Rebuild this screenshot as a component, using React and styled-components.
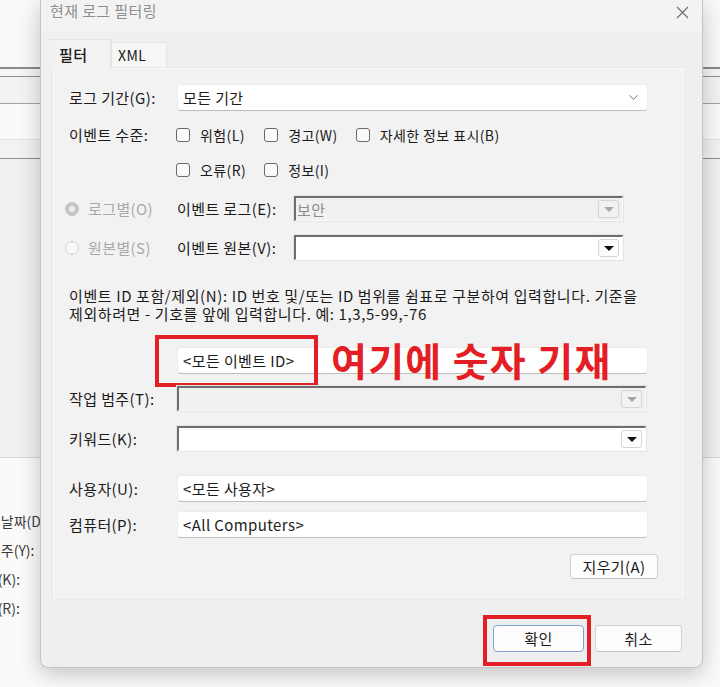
import React from 'react';
import styled, { createGlobalStyle } from 'styled-components';
import { ChevronDown } from 'lucide-react';

const FONT = `"Noto Sans CJK KR", "Noto Sans", "Liberation Sans", sans-serif`;
const FS = '15px';
const LS = '0.4px';

const Global = createGlobalStyle`
  html, body { margin: 0; padding: 0; }
  body {
    width: 720px; height: 687px; overflow: hidden;
    background: #f9f9f9;
    font-family: ${FONT};
    color: #1b1b1b;
  }
  * { box-sizing: border-box; }
`;

const Desktop = styled.div`
  position: relative;
  width: 720px;
  height: 687px;
  overflow: hidden;
`;

/* ---------- background window ---------- */
const BgWindow = styled.div`
  display: flex;
  flex-direction: column;
  width: 100%;
  height: 100%;
`;

const BgBand = styled.div`
  flex: none;
  height: ${p => p.$h}px;
  background: ${p => p.$bg};
  border-bottom: ${p => (p.$line ? `${p.$lw || 1}px solid ${p.$line}` : 'none')};
`;

const BgForm = styled.div`
  flex: 1;
  background: #fafafa;
  border-top: 1px solid #d6d6d6;
  padding-top: 49px;
  margin-left: -41px;
  display: flex;
  flex-direction: column;
`;

const BgLabel = styled.div`
  font-size: 14px;
  line-height: 29px;
  color: #3a3a3a;
  white-space: nowrap;
`;

/* ---------- dialog ---------- */
const Dialog = styled.div`
  position: absolute;
  left: 40px;
  top: 0;
  width: 663px;
  height: 668px;
  background: #efefef;
  border: 1px solid #c4c4c4;
  border-top: none;
  border-radius: 0 0 8px 8px;
  box-shadow: 0 6px 22px rgba(0, 0, 0, 0.22);
  display: flex;
  flex-direction: column;
  letter-spacing: ${LS};
`;

const TitleBar = styled.div`
  height: 31px;
  flex: none;
  display: flex;
  justify-content: space-between;
  align-items: flex-start;
  padding: 0 13px 0 9px;
  background: #f3f3f3;
`;

const Title = styled.div`
  font-size: ${FS};
  line-height: 22px;
  color: #8d8d8d;
`;

const CloseIcon = styled.svg`
  width: 13px;
  height: 13px;
  margin-top: 6px;
`;

const Body = styled.div`
  flex: 1;
  display: flex;
  flex-direction: column;
  padding: 0 20px 0 12px;
`;

const TabStrip = styled.div`
  display: flex;
  align-items: flex-end;
  height: 29px;
  margin-top: 8px;
  margin-left: -4px;
  position: relative;
  z-index: 1;
`;

const Tab = styled.div`
  height: ${p => (p.$active ? 30 : 26)}px;
  width: ${p => p.$w}px;
  padding-left: ${p => p.$pl}px;
  display: flex;
  align-items: center;
  font-size: ${p => (p.$active ? FS : '14px')};
  font-weight: ${p => (p.$active ? 500 : 400)};
  color: #1a1a1a;
  background: ${p => (p.$active ? '#f2f2f2' : '#f6f6f6')};
  border: 1px solid #e4e4e4;
  border-bottom: ${p => (p.$active ? 'none' : '1px solid #e4e4e4')};
  margin-bottom: ${p => (p.$active ? -1 : 0)}px;
  border-left: ${p => (p.$active ? 'none' : '1px solid #e4e4e4')};
`;

const Panel = styled.div`
  width: 631px;
  height: 530px;
  background: #f2f2f2;
  border: 1px solid #fbfbfb;
  box-shadow: 0 0 0 1px #e9e9e9;
  padding: 15px 25px 0 15px;
  display: flex;
  flex-direction: column;
`;

const Row = styled.div`
  display: flex;
  align-items: ${p => p.$align || 'center'};
  margin-top: ${p => p.$mt || 0}px;
  position: relative;
`;

const Label = styled.div`
  width: ${p => p.$w || 108}px;
  flex: none;
  font-size: ${FS};
  line-height: 22px;
  white-space: nowrap;
  color: #1b1b1b;
`;

const TextBox = styled.div`
  position: relative;
  width: 471px;
  height: 27px;
  display: flex;
  align-items: center;
  justify-content: space-between;
  padding: 0 6px 0 5px;
  background: #ffffff;
  border: 1px solid #ececec;
  border-bottom: 1px solid #bdbdbd;
  border-radius: 4px;
  font-size: ${FS};
  white-space: nowrap;
`;

const LevelGrid = styled.div`
  display: grid;
  grid-template-columns: repeat(3, auto);
  justify-content: start;
  column-gap: 18px;
  row-gap: 13px;
  margin-left: -1px;
`;

const Check = styled.div`
  display: flex;
  align-items: center;
  gap: 10px;
  height: 22px;
  font-size: 14px;
  white-space: nowrap;
`;

const Box = styled.span`
  width: 14px;
  height: 14px;
  border: 1px solid #6a6a6a;
  border-radius: 3px;
  background: #fbfbfb;
  flex: none;
`;

const RadioOpt = styled.div`
  width: 112px;
  margin-left: -4px;
  flex: none;
  display: flex;
  align-items: center;
  gap: 9px;
  font-size: ${FS};
  color: #a9a9a9;
  white-space: nowrap;
`;

const RadioDot = styled.span`
  width: 14px;
  height: 14px;
  border-radius: 50%;
  flex: none;
  display: flex;
  align-items: center;
  justify-content: center;
  background: ${p => (p.$on ? '#c4c4c4' : '#f8f8f8')};
  border: 1px solid ${p => (p.$on ? '#c4c4c4' : '#d2d2d2')};
  &::after {
    content: '';
    width: 6px;
    height: 6px;
    border-radius: 50%;
    background: ${p => (p.$on ? '#ececec' : 'transparent')};
  }
`;

const Combo = styled.div`
  width: ${p => p.$w}px;
  height: 25px;
  flex: none;
  display: flex;
  align-items: center;
  justify-content: space-between;
  padding: 0 3px 0 1px;
  background: ${p => (p.$disabled ? '#f0f0f0' : '#ffffff')};
  border-top: 2px solid #6e6e6e;
  border-left: 2px solid #6e6e6e;
  border-right: 1px solid #fdfdfd;
  border-bottom: 1px solid #fdfdfd;
  box-shadow: 0 0 0 1px #e4e4e4;
  font-size: ${FS};
  color: ${p => (p.$disabled ? '#8c8c8c' : '#1b1b1b')};
`;

const DropBtn = styled.span`
  width: 21px;
  height: 18px;
  border: 1px solid #d4d4d4;
  border-radius: 3px;
  background: ${p => (p.$disabled ? '#f2f2f2' : '#fdfdfd')};
  display: flex;
  align-items: center;
  justify-content: center;
  &::after {
    content: '';
    border-left: 5px solid transparent;
    border-right: 5px solid transparent;
    border-top: 5px solid ${p => (p.$disabled ? '#a8a8a8' : '#111111')};
  }
`;

const Desc = styled.div`
  margin-top: 27px;
  font-size: ${FS};
  line-height: 18px;
  letter-spacing: 0.6px;
  white-space: nowrap;
  color: #1b1b1b;
`;

const RedBox = styled.span`
  position: absolute;
  left: ${p => p.$l}px;
  top: ${p => p.$t}px;
  width: ${p => p.$w}px;
  height: ${p => p.$h}px;
  border: 4px solid #e41e25;
  pointer-events: none;
`;

const RedNote = styled.span`
  position: absolute;
  left: 153px;
  top: 50%;
  transform: translateY(-53%);
  font-size: 39px;
  font-weight: 700;
  line-height: 1;
  letter-spacing: 1.3px;
  color: #e31e24;
  white-space: nowrap;
`;

const Button = styled.div`
  position: relative;
  width: ${p => p.$w}px;
  height: ${p => p.$h || 27}px;
  display: flex;
  align-items: center;
  justify-content: center;
  background: #fdfdfd;
  border: 1px solid ${p => (p.$primary ? '#7ba6da' : '#d2d2d2')};
  border-bottom-color: ${p => (p.$primary ? '#7ba6da' : '#c2c2c2')};
  border-radius: 4px;
  font-size: ${FS};
  color: #1b1b1b;
`;

const ClearRow = styled.div`
  display: flex;
  justify-content: flex-end;
  margin-top: 16px;
`;

const Footer = styled.div`
  display: flex;
  justify-content: flex-end;
  gap: 11px;
  margin-top: 27px;
`;

const Chevron = styled(ChevronDown)`
  color: #5c5c5c;
`;

export default function App() {
  return (
    <>
      <Global />
      <Desktop>
        <BgWindow>
          <BgBand $h={69} $bg="#f9f9f9" $line="#8a8a8a" $lw={2} />
          <BgBand $h={8} $bg="#f5f5f5" $line="#8f8f8f" />
          <BgBand $h={27} $bg="#f3f3f3" $line="#a3a3a3" />
          <BgBand $h={36} $bg="#fafafa" $line="#e2e2e2" />
          <BgBand $h={19} $bg="#f2f2f2" $line="#8c8c8c" />
          <BgBand $h={298} $bg="#f0f0f0" />
          <BgForm>
            <BgLabel>기록된 날짜(D):</BgLabel>
            <BgLabel>작업 범주(Y):</BgLabel>
            <BgLabel>키워드(K):</BgLabel>
            <BgLabel>사용자(R):</BgLabel>
          </BgForm>
        </BgWindow>

        <Dialog>
          <TitleBar>
            <Title>현재 로그 필터링</Title>
            <CloseIcon viewBox="0 0 13 13">
              <path d="M1 1 L12 12 M12 1 L1 12" stroke="#6e6e6e" strokeWidth="1.1" fill="none" />
            </CloseIcon>
          </TitleBar>
          <Body>
            <TabStrip>
              <Tab $active $w={62} $pl={10}>필터</Tab>
              <Tab $w={56} $pl={6}>XML</Tab>
            </TabStrip>
            <Panel>
              <Row>
                <Label>로그 기간(G):</Label>
                <TextBox>
                  모든 기간
                  <Chevron size={15} strokeWidth={1.4} />
                </TextBox>
              </Row>

              <Row $align="flex-start" $mt={13}>
                <Label>이벤트 수준:</Label>
                <LevelGrid>
                  <Check><Box />위험(L)</Check>
                  <Check><Box />경고(W)</Check>
                  <Check><Box />자세한 정보 표시(B)</Check>
                  <Check><Box />오류(R)</Check>
                  <Check><Box />정보(I)</Check>
                </LevelGrid>
              </Row>

              <Row $mt={15}>
                <RadioOpt><RadioDot $on />로그별(O)</RadioOpt>
                <Label $w={117}>이벤트 로그(E):</Label>
                <Combo $w={329} $disabled>
                  보안
                  <DropBtn $disabled />
                </Combo>
              </Row>

              <Row $mt={14}>
                <RadioOpt><RadioDot />원본별(S)</RadioOpt>
                <Label $w={117}>이벤트 원본(V):</Label>
                <Combo $w={329}>
                  <span />
                  <DropBtn />
                </Combo>
              </Row>

              <Desc>
                이벤트 ID 포함/제외(N): ID 번호 및/또는 ID 범위를 쉼표로 구분하여 입력합니다. 기준을
                <br />
                제외하려면 - 기호를 앞에 입력합니다. 예: 1,3,5-99,-76
              </Desc>

              <Row $mt={24}>
                <Label />
                <TextBox>
                  &lt;모든 이벤트 ID&gt;
                  <RedBox $l={-23} $t={-13} $w={163} $h={52} />
                  <RedNote>여기에 숫자 기재</RedNote>
                </TextBox>
              </Row>

              <Row $mt={12}>
                <Label>작업 범주(T):</Label>
                <Combo $w={469} $disabled>
                  <span />
                  <DropBtn $disabled />
                </Combo>
              </Row>

              <Row $mt={15}>
                <Label>키워드(K):</Label>
                <Combo $w={469}>
                  <span />
                  <DropBtn />
                </Combo>
              </Row>

              <Row $mt={24}>
                <Label>사용자(U):</Label>
                <TextBox>&lt;모든 사용자&gt;</TextBox>
              </Row>

              <Row $mt={9}>
                <Label>컴퓨터(P):</Label>
                <TextBox>&lt;All Computers&gt;</TextBox>
              </Row>

              <ClearRow>
                <Button $w={88} $h={25}>지우기(A)</Button>
              </ClearRow>
            </Panel>

            <Footer>
              <Button $w={91} $primary>
                확인
                <RedBox $l={-11} $t={-11} $w={108} $h={51} />
              </Button>
              <Button $w={87}>취소</Button>
            </Footer>
          </Body>
        </Dialog>
      </Desktop>
    </>
  );
}
